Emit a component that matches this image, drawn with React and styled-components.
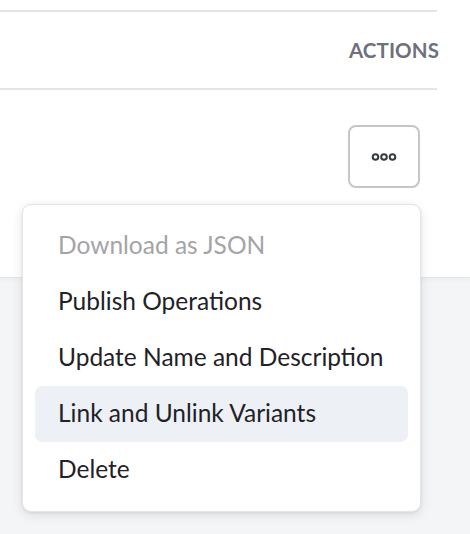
import React from 'react';
import styled, { createGlobalStyle } from 'styled-components';

const GlobalStyle = createGlobalStyle`
  html, body {
    margin: 0;
    padding: 0;
    background: #f4f5f7;
  }
  body {
    font-family: Lato, 'Noto Sans', sans-serif;
    width: 470px;
    height: 534px;
    overflow: hidden;
  }
`;

const Page = styled.div`
  position: relative;
  height: 534px;
  background: #f4f5f7;
`;

const TablePanel = styled.div`
  background: #fff;
  padding-top: 10px;
  border-bottom: 1px solid #e6e7ea;
  box-shadow: 0 2px 4px rgba(0, 0, 0, 0.04);
`;

const Table = styled.div`
  width: 437px;
`;

const HeaderRow = styled.div`
  display: flex;
  justify-content: flex-end;
  align-items: center;
  height: 76px;
  border-top: 2px solid #e3e4e8;
  border-bottom: 2px solid #e3e4e8;
`;

const HeaderCell = styled.span`
  font-size: 20.5px;
  font-weight: 700;
  color: #6c717d;
  letter-spacing: 0.1px;
  margin-right: -2px;
`;

const BodyRow = styled.div`
  display: flex;
  justify-content: flex-end;
  align-items: flex-start;
  height: 187px;
  padding-top: 35px;
  box-sizing: border-box;
`;

const MoreButton = styled.button`
  display: flex;
  align-items: center;
  justify-content: center;
  width: 72px;
  height: 63px;
  margin-right: 17px;
  background: #fff;
  border: 2px solid #c6c6c8;
  border-radius: 8px;
  padding: 0;
  cursor: pointer;
`;

const Menu = styled.ul`
  position: absolute;
  left: 22px;
  top: 204px;
  width: 399px;
  box-sizing: border-box;
  margin: 0;
  padding: 13px 12px;
  list-style: none;
  background: #fff;
  border: 1px solid #e4e5e8;
  border-radius: 9px;
  box-shadow: 0 3px 12px rgba(0, 0, 0, 0.1), 0 1px 3px rgba(0, 0, 0, 0.08);
`;

const MenuItem = styled.li`
  display: flex;
  align-items: center;
  height: 56px;
  box-sizing: border-box;
  padding: 0 0 3px 23px;
  border-radius: 7px;
  font-size: 24.5px;
  color: ${p => (p.$disabled ? '#a4a4a6' : '#1f2227')};
  background: ${p => (p.$active ? '#edf0f5' : 'transparent')};
`;

const items = [
  { label: 'Download as JSON', disabled: true },
  { label: 'Publish Operations' },
  { label: 'Update Name and Description' },
  { label: 'Link and Unlink Variants', active: true },
  { label: 'Delete' },
];

function DotsIcon() {
  return (
    <svg width="26" height="10" viewBox="0 0 26 10" fill="none" stroke="#363a44" strokeWidth="2">
      <circle cx="4.5" cy="5" r="2.8" />
      <circle cx="13" cy="5" r="2.8" />
      <circle cx="21.5" cy="5" r="2.8" />
    </svg>
  );
}

export default function App() {
  return (
    <Page>
      <GlobalStyle />
      <TablePanel>
        <Table>
          <HeaderRow>
            <HeaderCell>ACTIONS</HeaderCell>
          </HeaderRow>
          <BodyRow>
            <MoreButton aria-label="More actions">
              <DotsIcon />
            </MoreButton>
          </BodyRow>
        </Table>
      </TablePanel>
      <Menu>
        {items.map(item => (
          <MenuItem key={item.label} $disabled={item.disabled} $active={item.active}>
            {item.label}
          </MenuItem>
        ))}
      </Menu>
    </Page>
  );
}
